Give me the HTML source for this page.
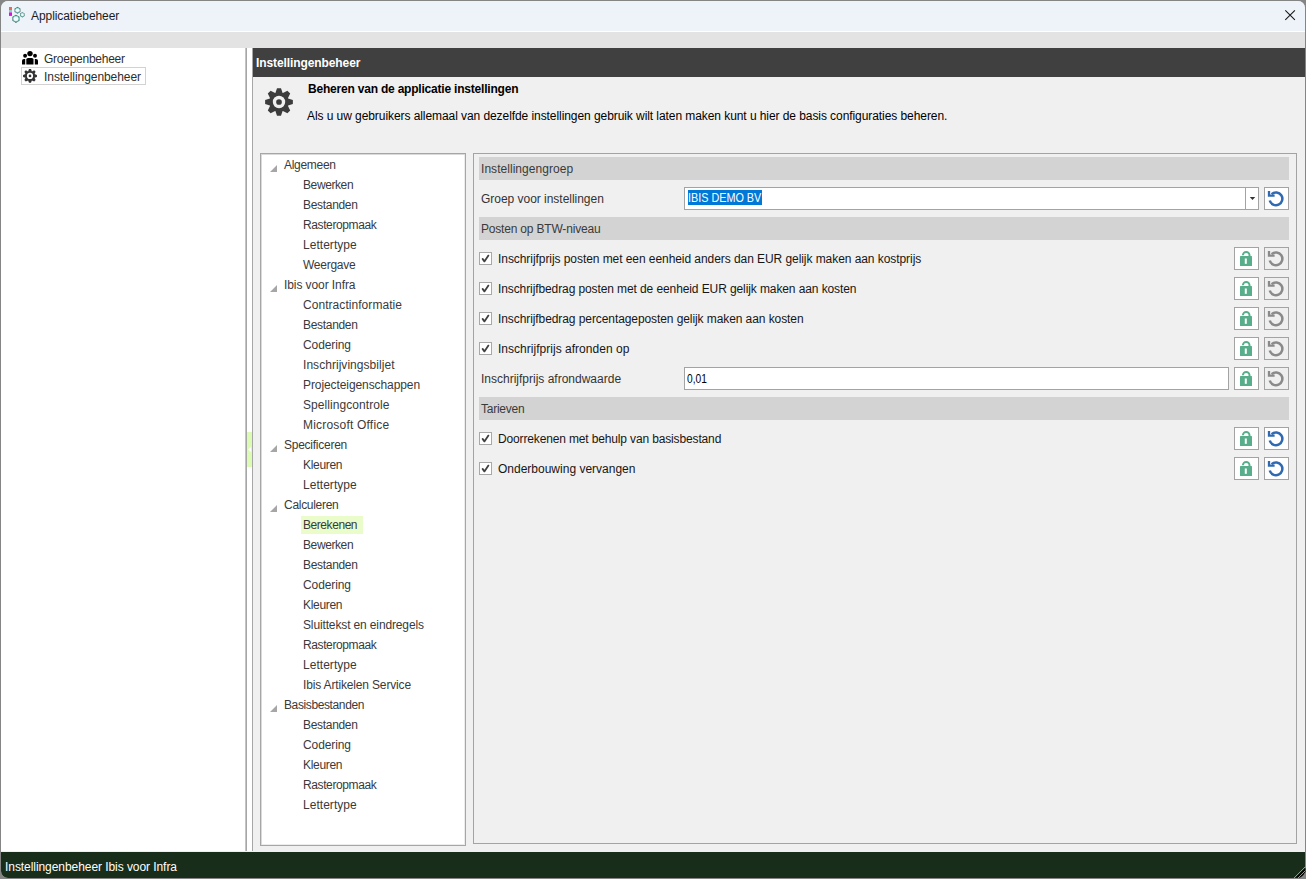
<!DOCTYPE html><html><head><meta charset="utf-8"><style>
*{margin:0;padding:0;box-sizing:border-box}
html,body{width:1306px;height:879px;overflow:hidden;background:#f0f0f0}
body{position:relative;font-family:"Liberation Sans",sans-serif;font-size:12px;color:#333}
.a{position:absolute}
.t{position:absolute;white-space:pre;line-height:14px;font-size:12px}
.tr{color:#3a3a3a}
.st{color:#333}
.cb{position:absolute;width:13px;height:13px;border:1px solid #a8a8a8;background:#fff}
.btn{position:absolute;width:25px;height:23px;border:1px solid #a3a3a3;background:#fff}
.btn.g{background:#efefef}
svg{position:absolute;left:0;top:0;overflow:visible}
.btn svg,.cb svg{left:-1px;top:-1px}
</style></head><body>
<div class="a" style="left:0;top:0;width:1306px;height:879px;background:#858585"></div>
<div class="a" style="left:1px;top:1px;width:1304px;height:877px;background:#f0f0f0;border-radius:7px 7px 7px 7px;overflow:hidden">
<div class="a" style="left:0;top:0;width:1304px;height:30px;background:#eef2f9"></div>
<div class="a" style="left:0;top:30px;width:1304px;height:1px;background:#ffffff"></div>
<div class="a" style="left:0;top:31px;width:1304px;height:16px;background:#e3e3e3"></div>
<div class="a" style="left:0;top:47px;width:1304px;height:1px;background:#d6d6d6"></div>
</div>
<div class="t " style="left:31px;top:9px;color:#1c1c1c;letter-spacing:-0.073px">Applicatiebeheer</div>
<svg width="1306" height="40" style="left:0;top:0"><path d="M1285.3,10.3 L1294.9,19.9 M1294.9,10.3 L1285.3,19.9" stroke="#1a1a1a" stroke-width="1.1" fill="none"/></svg>
<svg width="40" height="40" style="left:0;top:0">
<rect x="9" y="7" width="3" height="3" fill="#ef6a4c"/>
<rect x="9" y="10" width="3" height="2.4" fill="#7fd6c8"/>
<rect x="9" y="12.4" width="3" height="3.5" fill="#dc10e0"/>
<polygon points="17.50,6.85 18.96,7.72 20.44,8.55 20.42,10.25 20.44,11.95 18.96,12.78 17.50,13.65 16.04,12.78 14.56,11.95 14.58,10.25 14.56,8.55 16.04,7.72" fill="#3d6f6b"/><circle cx="17.5" cy="10.25" r="2.50" fill="#86d3c8"/><circle cx="17.5" cy="10.25" r="1.80" fill="#f4fbfa"/><polygon points="22.35,12.20 23.47,12.86 24.60,13.50 24.59,14.80 24.60,16.10 23.47,16.74 22.35,17.40 21.23,16.74 20.10,16.10 20.11,14.80 20.10,13.50 21.23,12.86" fill="#3d6f6b"/><circle cx="22.35" cy="14.8" r="2.00" fill="#86d3c8"/><circle cx="22.35" cy="14.8" r="1.30" fill="#f4fbfa"/><polygon points="15.95,14.70 17.71,15.75 19.50,16.75 19.48,18.80 19.50,20.85 17.71,21.85 15.95,22.90 14.19,21.85 12.40,20.85 12.42,18.80 12.40,16.75 14.19,15.75" fill="#3d6f6b"/><circle cx="15.95" cy="18.8" r="3.00" fill="#86d3c8"/><circle cx="15.95" cy="18.8" r="2.30" fill="#f4fbfa"/></svg>
<div class="a" style="left:1px;top:48px;width:244px;height:803px;background:#fff"></div>
<div class="a" style="left:245px;top:48px;width:1px;height:803px;background:#c4c4c4"></div>
<div class="a" style="left:246px;top:48px;width:1px;height:803px;background:#a6a6a6"></div>
<div class="a" style="left:247px;top:48px;width:5px;height:803px;background:#fff"></div>
<div class="a" style="left:252px;top:48px;width:1px;height:803px;background:#a6a6a6"></div>
<div class="a" style="left:247px;top:432px;width:5px;height:35px;background:#dcfcb4"></div>
<svg width="10" height="10" style="left:247px;top:445px"><path d="M0.9,4.5 L4.1,1.9 L4.1,7.1Z" fill="#fff"/></svg>
<svg width="40" height="20" style="left:0;top:48px">
<circle cx="30" cy="5.6" r="2.7" fill="#000"/>
<circle cx="25.1" cy="7.8" r="1.95" fill="#000"/>
<circle cx="35" cy="7.8" r="1.95" fill="#000"/>
<path d="M26.3,11.6 Q26.3,9.9 28,9.9 L31.8,9.9 Q33.5,9.9 33.5,11.6 L33.5,16.6 L26.3,16.6Z" fill="#000"/>
<path d="M22,12.6 Q22,11 24,11 L25.2,11 L25.2,16.6 L22.6,16.6 Q22,16.6 22,16 Z" fill="#000"/>
<path d="M38,12.6 Q38,11 36,11 L34.8,11 L34.8,16.6 L37.4,16.6 Q38,16.6 38,16 Z" fill="#000"/>
</svg>
<div class="t " style="left:44px;top:52px;color:#2e2e2e;letter-spacing:-0.258px">Groepenbeheer</div>
<div class="a" style="left:21px;top:67px;width:125px;height:18px;border:1px solid #d2d2d2"></div>
<svg width="40" height="90" style="left:0;top:0"><path d="M28.15,71.36 L29.00,68.97 L31.00,68.97 L31.85,71.36 L31.90,71.38 L34.19,70.30 L35.60,71.71 L34.52,74.00 L34.54,74.05 L36.93,74.90 L36.93,76.90 L34.54,77.75 L34.52,77.80 L35.60,80.09 L34.19,81.50 L31.90,80.42 L31.85,80.44 L31.00,82.83 L29.00,82.83 L28.15,80.44 L28.10,80.42 L25.81,81.50 L24.40,80.09 L25.48,77.80 L25.46,77.75 L23.07,76.90 L23.07,74.90 L25.46,74.05 L25.48,74.00 L24.40,71.71 L25.81,70.30 L28.10,71.38Z" fill="#333"/><circle cx="30" cy="75.9" r="3.1" fill="#fff"/><circle cx="30" cy="75.9" r="1.35" fill="#333"/></svg>
<div class="t " style="left:44px;top:70px;color:#2e2e2e;letter-spacing:-0.059px">Instellingenbeheer</div>
<div class="a" style="left:253px;top:48px;width:1052px;height:29px;background:#404040"></div>
<div class="t " style="left:256px;top:56px;color:#fff;font-weight:bold;letter-spacing:-0.094px">Instellingenbeheer</div>
<svg width="300" height="130" style="left:0;top:0"><path d="M275.39,92.89 L277.01,88.14 L280.99,88.14 L282.61,92.89 L282.89,93.00 L287.39,90.79 L290.21,93.61 L288.00,98.11 L288.11,98.39 L292.86,100.01 L292.86,103.99 L288.11,105.61 L288.00,105.89 L290.21,110.39 L287.39,113.21 L282.89,111.00 L282.61,111.11 L280.99,115.86 L277.01,115.86 L275.39,111.11 L275.11,111.00 L270.61,113.21 L267.79,110.39 L270.00,105.89 L269.89,105.61 L265.14,103.99 L265.14,100.01 L269.89,98.39 L270.00,98.11 L267.79,93.61 L270.61,90.79 L275.11,93.00Z" fill="#3c3c3c"/><circle cx="279" cy="102" r="6.2" fill="#f0f0f0"/><circle cx="279" cy="102" r="2.85" fill="#3c3c3c"/></svg>
<div class="t " style="left:308px;top:82px;color:#000;font-weight:bold;letter-spacing:-0.205px">Beheren van de applicatie instellingen</div>
<div class="t " style="left:307px;top:109px;color:#000;letter-spacing:-0.071px">Als u uw gebruikers allemaal van dezelfde instellingen gebruik wilt laten maken kunt u hier de basis configuraties beheren.</div>
<div class="a" style="left:260px;top:153px;width:206px;height:693px;background:#fff;border:1px solid #a6a6a6;box-shadow:inset 1px 1px 0 #dadada,inset -1px -1px 0 #ececec"></div>
<div class="t tr" style="left:284px;top:158px;;letter-spacing:-0.286px">Algemeen</div>
<div class="t tr" style="left:303px;top:178px;;letter-spacing:-0.4px">Bewerken</div>
<div class="t tr" style="left:303px;top:198px;;letter-spacing:-0.312px">Bestanden</div>
<div class="t tr" style="left:303px;top:218px;;letter-spacing:-0.391px">Rasteropmaak</div>
<div class="t tr" style="left:303px;top:238px;;letter-spacing:0.033px">Lettertype</div>
<div class="t tr" style="left:303px;top:258px;;letter-spacing:-0.257px">Weergave</div>
<div class="t tr" style="left:284px;top:278px;;letter-spacing:-0.086px">Ibis voor Infra</div>
<div class="t tr" style="left:303px;top:298px;;letter-spacing:0.053px">Contractinformatie</div>
<div class="t tr" style="left:303px;top:318px;;letter-spacing:-0.312px">Bestanden</div>
<div class="t tr" style="left:303px;top:338px;;letter-spacing:-0.1px">Codering</div>
<div class="t tr" style="left:303px;top:358px;;letter-spacing:0.044px">Inschrijvingsbiljet</div>
<div class="t tr" style="left:303px;top:378px;;letter-spacing:-0.089px">Projecteigenschappen</div>
<div class="t tr" style="left:303px;top:398px;;letter-spacing:0.067px">Spellingcontrole</div>
<div class="t tr" style="left:303px;top:418px;;letter-spacing:0.2px">Microsoft Office</div>
<div class="t tr" style="left:284px;top:438px;;letter-spacing:-0.255px">Specificeren</div>
<div class="t tr" style="left:303px;top:458px;;letter-spacing:-0.317px">Kleuren</div>
<div class="t tr" style="left:303px;top:478px;;letter-spacing:0.033px">Lettertype</div>
<div class="t tr" style="left:284px;top:498px;;letter-spacing:-0.289px">Calculeren</div>
<div class="a" style="left:301px;top:516px;width:62px;height:18px;background:#e9fcc9"></div>
<div class="t tr" style="left:303px;top:518px;;letter-spacing:-0.438px">Berekenen</div>
<div class="t tr" style="left:303px;top:538px;;letter-spacing:-0.4px">Bewerken</div>
<div class="t tr" style="left:303px;top:558px;;letter-spacing:-0.312px">Bestanden</div>
<div class="t tr" style="left:303px;top:578px;;letter-spacing:-0.1px">Codering</div>
<div class="t tr" style="left:303px;top:598px;;letter-spacing:-0.317px">Kleuren</div>
<div class="t tr" style="left:303px;top:618px;;letter-spacing:-0.135px">Sluittekst en eindregels</div>
<div class="t tr" style="left:303px;top:638px;;letter-spacing:-0.391px">Rasteropmaak</div>
<div class="t tr" style="left:303px;top:658px;;letter-spacing:0.033px">Lettertype</div>
<div class="t tr" style="left:303px;top:678px;;letter-spacing:-0.157px">Ibis Artikelen Service</div>
<div class="t tr" style="left:284px;top:698px;;letter-spacing:-0.385px">Basisbestanden</div>
<div class="t tr" style="left:303px;top:718px;;letter-spacing:-0.312px">Bestanden</div>
<div class="t tr" style="left:303px;top:738px;;letter-spacing:-0.1px">Codering</div>
<div class="t tr" style="left:303px;top:758px;;letter-spacing:-0.317px">Kleuren</div>
<div class="t tr" style="left:303px;top:778px;;letter-spacing:-0.391px">Rasteropmaak</div>
<div class="t tr" style="left:303px;top:798px;;letter-spacing:0.033px">Lettertype</div>
<svg width="300" height="900" style="left:0;top:0"><path d="M270,172 L277,172 L277,165Z M270,292 L277,292 L277,285Z M270,452 L277,452 L277,445Z M270,512 L277,512 L277,505Z M270,712 L277,712 L277,705Z" fill="#a6a6a6"/></svg>
<div class="a" style="left:473px;top:153px;width:824px;height:691px;border:1px solid #a3a3a3"></div>
<div class="a" style="left:479px;top:157px;width:810px;height:23px;background:#d3d3d3"></div>
<div class="t st" style="left:481px;top:162px;color:#3a3a3a;letter-spacing:0.044px">Instellingengroep</div>
<div class="t st" style="left:481px;top:192px;;letter-spacing:-0.027px">Groep voor instellingen</div>
<div class="a" style="left:684px;top:187px;width:575px;height:23px;border:1px solid #a3a3a3;background:#fff"></div>
<div class="a" style="left:1245px;top:188px;width:1px;height:21px;background:#a3a3a3"></div>
<svg width="20" height="20" style="left:1246px;top:190px"><path d="M3.8,7 L9.2,7 L6.5,10Z" fill="#333"/></svg>
<div class="a" style="left:688px;top:190px;width:74px;height:15px;background:#0078d7"></div>
<div class="t " style="left:688px;top:191px;color:#fff;transform:scaleX(0.9);transform-origin:0 0">IBIS DEMO BV</div>
<div class="btn" style="left:1264px;top:187px"><svg width="25" height="23"><path d="M5.75,13.5 A6.4,6.4 0 1 0 7.6,7.1" fill="none" stroke="#2e69b1" stroke-width="2.5"/><path d="M5,3.9 L5,8.6 L10.6,8.6" fill="none" stroke="#2e69b1" stroke-width="2.3"/></svg></div>
<div class="a" style="left:479px;top:217px;width:810px;height:23px;background:#d3d3d3"></div>
<div class="t st" style="left:481px;top:222px;color:#3a3a3a;letter-spacing:-0.189px">Posten op BTW-niveau</div>
<div class="cb" style="left:479px;top:252px"><svg width="13" height="13"><path d="M3.6,6.9 L5.4,9.4 L9.4,3.6" fill="none" stroke="#404040" stroke-width="1.8" stroke-linecap="round" stroke-linejoin="round"/></svg></div>
<div class="t st" style="left:498px;top:252px;color:#161616;letter-spacing:-0.064px">Inschrijfprijs posten met een eenheid anders dan EUR gelijk maken aan kostprijs</div>
<div class="btn" style="left:1234px;top:247px"><svg width="25" height="23"><rect x="6" y="9" width="12" height="10" rx="0.5" fill="#58ae8a"/><rect x="10.8" y="11.5" width="2" height="5.3" fill="#fff"/><path d="M8.9,8.2 A3.3,3.3 0 0 1 15.5,8.2 L15.5,9.5" fill="none" stroke="#58ae8a" stroke-width="2"/></svg></div>
<div class="btn g" style="left:1264px;top:247px"><svg width="25" height="23"><path d="M5.75,13.5 A6.4,6.4 0 1 0 7.6,7.1" fill="none" stroke="#8a8a8a" stroke-width="2.5"/><path d="M5,3.9 L5,8.6 L10.6,8.6" fill="none" stroke="#8a8a8a" stroke-width="2.3"/></svg></div>
<div class="cb" style="left:479px;top:282px"><svg width="13" height="13"><path d="M3.6,6.9 L5.4,9.4 L9.4,3.6" fill="none" stroke="#404040" stroke-width="1.8" stroke-linecap="round" stroke-linejoin="round"/></svg></div>
<div class="t st" style="left:498px;top:282px;color:#161616;letter-spacing:-0.1px">Inschrijfbedrag posten met de eenheid EUR gelijk maken aan kosten</div>
<div class="btn" style="left:1234px;top:277px"><svg width="25" height="23"><rect x="6" y="9" width="12" height="10" rx="0.5" fill="#58ae8a"/><rect x="10.8" y="11.5" width="2" height="5.3" fill="#fff"/><path d="M8.9,8.2 A3.3,3.3 0 0 1 15.5,8.2 L15.5,9.5" fill="none" stroke="#58ae8a" stroke-width="2"/></svg></div>
<div class="btn g" style="left:1264px;top:277px"><svg width="25" height="23"><path d="M5.75,13.5 A6.4,6.4 0 1 0 7.6,7.1" fill="none" stroke="#8a8a8a" stroke-width="2.5"/><path d="M5,3.9 L5,8.6 L10.6,8.6" fill="none" stroke="#8a8a8a" stroke-width="2.3"/></svg></div>
<div class="cb" style="left:479px;top:312px"><svg width="13" height="13"><path d="M3.6,6.9 L5.4,9.4 L9.4,3.6" fill="none" stroke="#404040" stroke-width="1.8" stroke-linecap="round" stroke-linejoin="round"/></svg></div>
<div class="t st" style="left:498px;top:312px;color:#161616;letter-spacing:-0.084px">Inschrijfbedrag percentageposten gelijk maken aan kosten</div>
<div class="btn" style="left:1234px;top:307px"><svg width="25" height="23"><rect x="6" y="9" width="12" height="10" rx="0.5" fill="#58ae8a"/><rect x="10.8" y="11.5" width="2" height="5.3" fill="#fff"/><path d="M8.9,8.2 A3.3,3.3 0 0 1 15.5,8.2 L15.5,9.5" fill="none" stroke="#58ae8a" stroke-width="2"/></svg></div>
<div class="btn g" style="left:1264px;top:307px"><svg width="25" height="23"><path d="M5.75,13.5 A6.4,6.4 0 1 0 7.6,7.1" fill="none" stroke="#8a8a8a" stroke-width="2.5"/><path d="M5,3.9 L5,8.6 L10.6,8.6" fill="none" stroke="#8a8a8a" stroke-width="2.3"/></svg></div>
<div class="cb" style="left:479px;top:342px"><svg width="13" height="13"><path d="M3.6,6.9 L5.4,9.4 L9.4,3.6" fill="none" stroke="#404040" stroke-width="1.8" stroke-linecap="round" stroke-linejoin="round"/></svg></div>
<div class="t st" style="left:498px;top:342px;color:#161616;letter-spacing:0.024px">Inschrijfprijs afronden op</div>
<div class="btn" style="left:1234px;top:337px"><svg width="25" height="23"><rect x="6" y="9" width="12" height="10" rx="0.5" fill="#58ae8a"/><rect x="10.8" y="11.5" width="2" height="5.3" fill="#fff"/><path d="M8.9,8.2 A3.3,3.3 0 0 1 15.5,8.2 L15.5,9.5" fill="none" stroke="#58ae8a" stroke-width="2"/></svg></div>
<div class="btn g" style="left:1264px;top:337px"><svg width="25" height="23"><path d="M5.75,13.5 A6.4,6.4 0 1 0 7.6,7.1" fill="none" stroke="#8a8a8a" stroke-width="2.5"/><path d="M5,3.9 L5,8.6 L10.6,8.6" fill="none" stroke="#8a8a8a" stroke-width="2.3"/></svg></div>
<div class="t st" style="left:481px;top:372px;">Inschrijfprijs afrondwaarde</div>
<div class="a" style="left:684px;top:367px;width:545px;height:23px;border:1px solid #a3a3a3;background:#fff"></div>
<div class="t " style="left:687px;top:372px;color:#000;transform:scaleX(0.85);transform-origin:0 0">0,01</div>
<div class="btn" style="left:1234px;top:367px"><svg width="25" height="23"><rect x="6" y="9" width="12" height="10" rx="0.5" fill="#58ae8a"/><rect x="10.8" y="11.5" width="2" height="5.3" fill="#fff"/><path d="M8.9,8.2 A3.3,3.3 0 0 1 15.5,8.2 L15.5,9.5" fill="none" stroke="#58ae8a" stroke-width="2"/></svg></div>
<div class="btn g" style="left:1264px;top:367px"><svg width="25" height="23"><path d="M5.75,13.5 A6.4,6.4 0 1 0 7.6,7.1" fill="none" stroke="#8a8a8a" stroke-width="2.5"/><path d="M5,3.9 L5,8.6 L10.6,8.6" fill="none" stroke="#8a8a8a" stroke-width="2.3"/></svg></div>
<div class="a" style="left:479px;top:397px;width:810px;height:23px;background:#d3d3d3"></div>
<div class="t st" style="left:481px;top:402px;color:#3a3a3a;letter-spacing:-0.257px">Tarieven</div>
<div class="cb" style="left:479px;top:432px"><svg width="13" height="13"><path d="M3.6,6.9 L5.4,9.4 L9.4,3.6" fill="none" stroke="#404040" stroke-width="1.8" stroke-linecap="round" stroke-linejoin="round"/></svg></div>
<div class="t st" style="left:498px;top:432px;color:#161616;letter-spacing:-0.145px">Doorrekenen met behulp van basisbestand</div>
<div class="btn" style="left:1234px;top:427px"><svg width="25" height="23"><rect x="6" y="9" width="12" height="10" rx="0.5" fill="#58ae8a"/><rect x="10.8" y="11.5" width="2" height="5.3" fill="#fff"/><path d="M8.9,8.2 A3.3,3.3 0 0 1 15.5,8.2 L15.5,9.5" fill="none" stroke="#58ae8a" stroke-width="2"/></svg></div>
<div class="btn" style="left:1264px;top:427px"><svg width="25" height="23"><path d="M5.75,13.5 A6.4,6.4 0 1 0 7.6,7.1" fill="none" stroke="#2e69b1" stroke-width="2.5"/><path d="M5,3.9 L5,8.6 L10.6,8.6" fill="none" stroke="#2e69b1" stroke-width="2.3"/></svg></div>
<div class="cb" style="left:479px;top:462px"><svg width="13" height="13"><path d="M3.6,6.9 L5.4,9.4 L9.4,3.6" fill="none" stroke="#404040" stroke-width="1.8" stroke-linecap="round" stroke-linejoin="round"/></svg></div>
<div class="t st" style="left:498px;top:462px;color:#161616">Onderbouwing vervangen</div>
<div class="btn" style="left:1234px;top:457px"><svg width="25" height="23"><rect x="6" y="9" width="12" height="10" rx="0.5" fill="#58ae8a"/><rect x="10.8" y="11.5" width="2" height="5.3" fill="#fff"/><path d="M8.9,8.2 A3.3,3.3 0 0 1 15.5,8.2 L15.5,9.5" fill="none" stroke="#58ae8a" stroke-width="2"/></svg></div>
<div class="btn" style="left:1264px;top:457px"><svg width="25" height="23"><path d="M5.75,13.5 A6.4,6.4 0 1 0 7.6,7.1" fill="none" stroke="#2e69b1" stroke-width="2.5"/><path d="M5,3.9 L5,8.6 L10.6,8.6" fill="none" stroke="#2e69b1" stroke-width="2.3"/></svg></div>
<div class="a" style="left:1px;top:852px;width:1304px;height:26px;background:#182e1a;border-radius:0 0 7px 7px"></div>
<div class="t " style="left:5px;top:860px;color:#fff;letter-spacing:-0.064px">Instellingenbeheer Ibis voor Infra</div>
<svg width="20" height="20" style="left:1288px;top:860px"><path d="M17.5,8 L8,17.5 L12,17.5 L17.5,12Z" fill="#000"/><path d="M17.5,6.5 L6,18 M17.5,10.5 L10,18" stroke="#4fc070" stroke-width="1"/></svg>
</body></html>
